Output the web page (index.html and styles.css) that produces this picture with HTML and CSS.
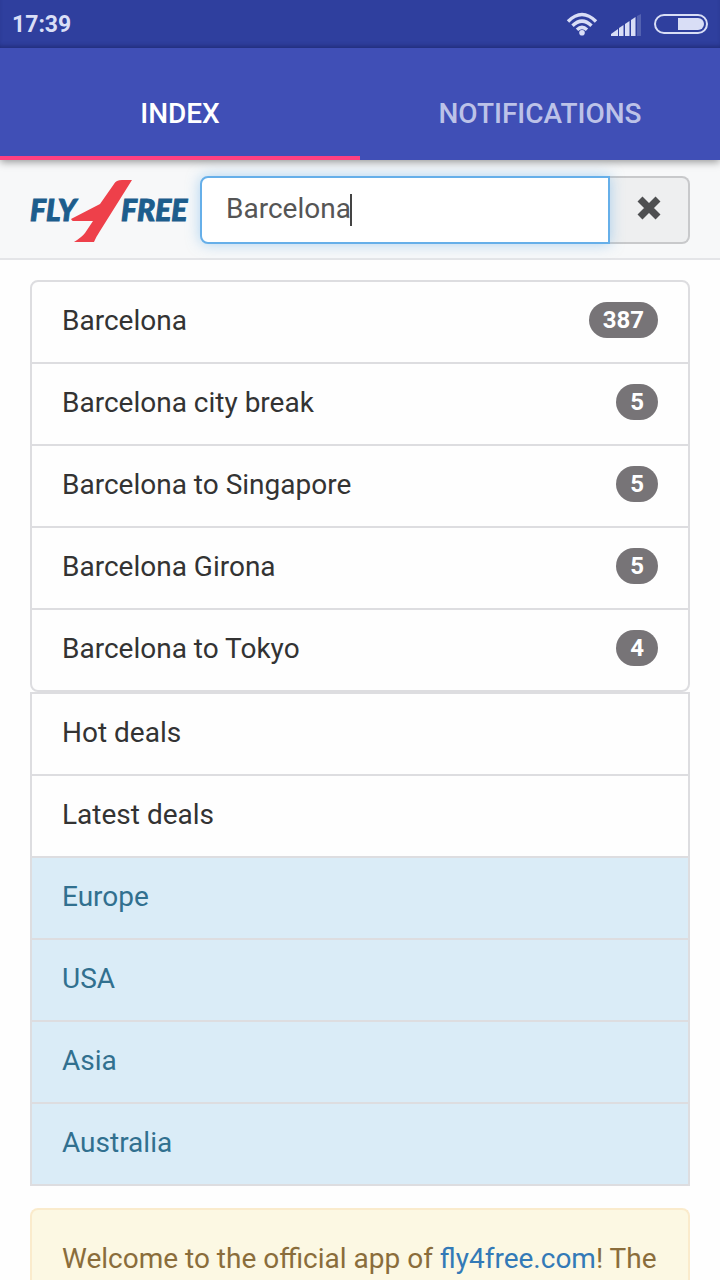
FILE: index.html
```html
<!DOCTYPE html>
<html lang="en">
<head>
<meta charset="utf-8">
<meta name="viewport" content="width=device-width, initial-scale=1">
<title>Fly4free</title>
<link rel="stylesheet" href="styles.css">
</head>
<body>
<header class="top">
  <div class="status">
    <span class="clock">17:39</span>
    <div class="status-icons">
      <svg class="wifi" viewBox="0 0 32 24" width="32" height="24" aria-hidden="true">
        <g fill="none" stroke="currentColor" stroke-width="3.400">
          <path d="M2 9.500Q16 -4.500 30 9.500"/>
          <path d="M6.500 13.800Q16 4.500 25.500 13.800"/>
          <path d="M11 17.800Q16 13 21 17.800"/>
        </g>
        <circle cx="16" cy="20.800" r="2.800" fill="currentColor"/>
      </svg>
      <svg class="signal" viewBox="0 0 30 22" width="30" height="22" aria-hidden="true">
        <g fill="currentColor">
          <path d="M0 22V20L7 15V22Z"/>
          <path d="M8 22V14L12.500 11V22Z"/>
          <path d="M14 22V10L18.500 7V22Z"/>
          <path d="M20 22V6L24.500 3V22Z"/>
          <path d="M26 22V2L30 0V22Z" opacity=".22"/>
        </g>
      </svg>
      <svg class="battery" viewBox="0 0 54 20" width="54" height="20" aria-hidden="true">
        <rect x="1" y="1" width="52" height="18" rx="9" fill="none" stroke="currentColor" stroke-width="2"/>
        <path d="M24 4H44A6 6 0 0 1 44 16H24Z" fill="currentColor"/>
      </svg>
    </div>
  </div>
  <nav class="tabs">
    <a class="tab tab-active" href="#index" aria-current="page">INDEX</a>
    <a class="tab" href="#notifications">NOTIFICATIONS</a>
  </nav>
</header>
<form class="search">
  <svg class="logo" viewBox="0 0 160 68" width="160" height="68" role="img" aria-label="Fly4free">
    <text class="logo-text" x="0" y="45">FLY</text>
    <text class="logo-text" x="91" y="45">FREE</text>
    <path d="M102 4H92Q86 4 84 8L70 28L41 43Q42 45 43 45H63L55 57Q52 61 44 66H64Q66 61 70 55Z" fill="#ee404a"/>
  </svg>
  <div class="group">
    <div class="field">
      <input class="input" type="text" value="Barcelona" aria-label="Search">
      <span class="caret"></span>
    </div>
    <button class="clear" type="button" aria-label="Clear">
      <svg viewBox="0 0 24 24" width="24" height="24" aria-hidden="true">
        <path d="M3 3L21 21M21 3L3 21" stroke="currentColor" stroke-width="7"/>
      </svg>
    </button>
  </div>
</form>
<main class="content">
  <div class="list list-rounded">
    <a class="item" href="#q1">Barcelona <span class="badge">387</span></a>
    <a class="item" href="#q2">Barcelona city break <span class="badge">5</span></a>
    <a class="item" href="#q3">Barcelona to Singapore <span class="badge">5</span></a>
    <a class="item" href="#q4">Barcelona Girona <span class="badge">5</span></a>
    <a class="item" href="#q5">Barcelona to Tokyo <span class="badge">4</span></a>
  </div>
  <div class="list">
    <a class="item" href="#hot">Hot deals</a>
    <a class="item" href="#latest">Latest deals</a>
    <a class="item item-info" href="#europe">Europe</a>
    <a class="item item-info" href="#usa">USA</a>
    <a class="item item-info" href="#asia">Asia</a>
    <a class="item item-info" href="#australia">Australia</a>
  </div>
  <p class="notice">Welcome to the official app of <a class="link" href="#site">fly4free.com</a>! The</p>
</main>
</body>
</html>
```
FILE: styles.css
```css
* {
  box-sizing: border-box;
}

body {
  margin: 0;
  min-height: 100vh;
  display: flex;
  flex-direction: column;
  background: #fefefe;
  color: #333;
  font: 28px/40px Roboto, "Noto Sans", sans-serif;
}

a {
  text-decoration: none;
}

.top {
  position: relative;
  background: #404fb6;
  box-shadow: 0 2px 8px rgba(0, 0, 0, 0.4);
}

.status {
  display: flex;
  align-items: center;
  justify-content: space-between;
  height: 48px;
  padding: 0 12px;
  background: #2f3f9e;
  box-shadow: inset 0 -4px 4px -2px rgba(20, 28, 90, 0.5);
  color: #d9def6;
}

.clock {
  padding-top: 2px;
  font-size: 23px;
  font-weight: 700;
}

.status-icons {
  display: flex;
  align-items: center;
  gap: 13px;
}

.signal {
  margin-top: 2px;
}

.tabs {
  display: grid;
  grid-template-columns: 1fr 1fr;
}

.tab {
  padding: 46px 0 22px;
  border-bottom: 4px solid transparent;
  color: #bcc2e8;
  font-weight: 500;
  text-align: center;
}

.tab-active {
  border-color: #ff4081;
  color: #fff;
}

.search {
  display: flex;
  align-items: center;
  gap: 10px;
  padding: 16px 30px 14px;
  border-bottom: 2px solid #e4e5e8;
  background: #f7f8f9;
}

.logo {
  flex: none;
}

.logo-text {
  fill: #1d5d8c;
  stroke: #1d5d8c;
  stroke-width: 1px;
  font: italic 900 30px Lato, sans-serif;
}

.group {
  display: flex;
  flex: 1;
}

.field {
  position: relative;
  flex: 1;
}

.input {
  display: block;
  width: 100%;
  height: 68px;
  padding: 0 24px 4px;
  border: 2px solid #66afe9;
  border-radius: 8px 0 0 8px;
  outline: 0;
  background: #fff;
  box-shadow: 0 0 14px rgba(102, 175, 233, 0.5);
  color: #555;
  font: inherit;
}

.caret {
  position: absolute;
  top: 18px;
  left: 150px;
  width: 2px;
  height: 32px;
  background: #444;
}

.clear {
  display: flex;
  align-items: center;
  justify-content: center;
  width: 80px;
  padding: 0 0 4px;
  border: 2px solid #c8c9cb;
  border-left: 0;
  border-radius: 0 8px 8px 0;
  background: #eeeff0;
  color: #4e4f51;
}

.content {
  display: flex;
  flex: 1;
  flex-direction: column;
  padding: 20px 30px 0;
}

.list {
  border: 2px solid #dddde0;
}

.list-rounded {
  border-radius: 8px;
}

.item {
  display: flex;
  align-items: center;
  justify-content: space-between;
  height: 80px;
  padding: 0 30px 2px;
  color: #333;
}

.item + .item {
  height: 82px;
  border-top: 2px solid #dddde0;
}

.item-info {
  background: #daecf7;
  color: #31708f;
}

.badge {
  margin-bottom: 2px;
  padding: 0 14px;
  border-radius: 18px;
  background: #777477;
  color: #fff;
  font-size: 24px;
  font-weight: 700;
  line-height: 36px;
}

.notice {
  flex: 1;
  margin: 22px 0 0;
  padding: 29px 30px 0;
  border: 2px solid #faebcc;
  border-bottom: 0;
  border-radius: 8px 8px 0 0;
  background: #fcf8e3;
  color: #8a6d3b;
}

.link {
  color: #337ab7;
}
```
